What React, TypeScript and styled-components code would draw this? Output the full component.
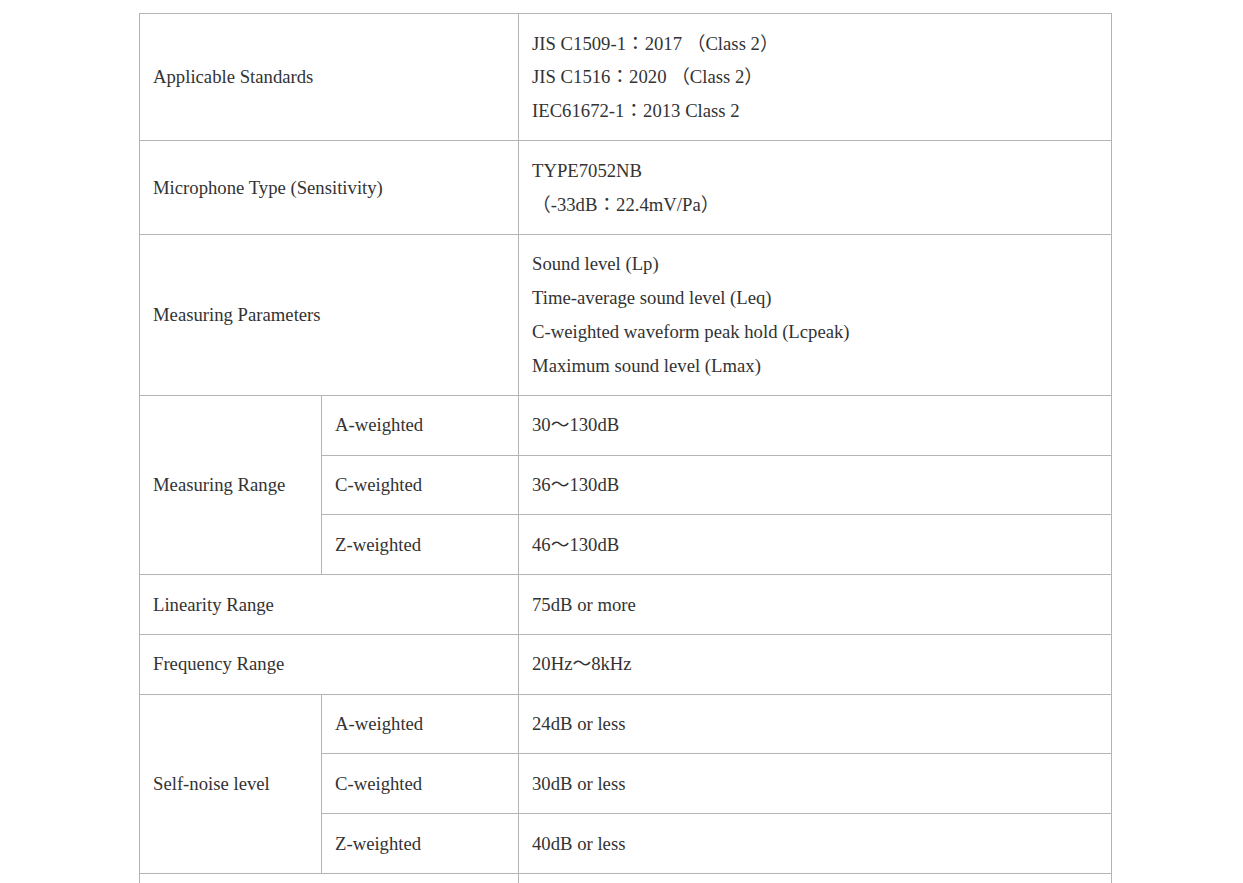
import React from "react";
import styled, { createGlobalStyle } from "styled-components";

const Global = createGlobalStyle`
  html, body { margin: 0; padding: 0; background: #ffffff; }
  body { font-family: "Liberation Serif", "Noto Sans CJK JP", serif; color: #333333; }
`;

const Page = styled.div`
  padding: 13px 0 0 139px;
`;

const Table = styled.table`
  width: 973px;
  border-collapse: collapse;
  table-layout: fixed;
  font-size: 18.7px;
  line-height: 33.75px;
  color: #333333;
`;

const Cell = styled.td`
  border: 1px solid #b4b4b4;
  padding: 12.5px 13px;
  vertical-align: middle;
  text-align: left;
`;

const EmptyCell = styled(Cell)`
  height: 34px;
`;

const Line = styled.div`
  white-space: nowrap;
`;

type Row = { label: string; value: string[] };
type Group = { label: string; subs: { label: string; value: string }[] };

const Wide = ({ label, value }: Row) => (
  <tr>
    <Cell colSpan={2}>{label}</Cell>
    <Cell>
      {value.map((v, i) => (
        <Line key={i}>{v}</Line>
      ))}
    </Cell>
  </tr>
);

const GroupRows = ({ label, subs }: Group) => (
  <>
    {subs.map((s, i) => (
      <tr key={i}>
        {i === 0 && <Cell rowSpan={subs.length}>{label}</Cell>}
        <Cell>{s.label}</Cell>
        <Cell>{s.value}</Cell>
      </tr>
    ))}
  </>
);

export default function App() {
  return (
    <>
      <Global />
      <Page>
        <Table>
          <colgroup>
            <col style={{ width: 182 }} />
            <col style={{ width: 197 }} />
            <col />
          </colgroup>
          <tbody>
            <Wide
              label="Applicable Standards"
              value={[
                "JIS C1509-1：2017 （Class 2）",
                "JIS C1516：2020 （Class 2）",
                "IEC61672-1：2013 Class 2",
              ]}
            />
            <Wide
              label="Microphone Type (Sensitivity)"
              value={["TYPE7052NB", "（-33dB：22.4mV/Pa）"]}
            />
            <Wide
              label="Measuring Parameters"
              value={[
                "Sound level (Lp)",
                "Time-average sound level (Leq)",
                "C-weighted waveform peak hold (Lcpeak)",
                "Maximum sound level (Lmax)",
              ]}
            />
            <GroupRows
              label="Measuring Range"
              subs={[
                { label: "A-weighted", value: "30〜130dB" },
                { label: "C-weighted", value: "36〜130dB" },
                { label: "Z-weighted", value: "46〜130dB" },
              ]}
            />
            <Wide label="Linearity Range" value={["75dB or more"]} />
            <Wide label="Frequency Range" value={["20Hz〜8kHz"]} />
            <GroupRows
              label="Self-noise level"
              subs={[
                { label: "A-weighted", value: "24dB or less" },
                { label: "C-weighted", value: "30dB or less" },
                { label: "Z-weighted", value: "40dB or less" },
              ]}
            />
            <tr>
              <EmptyCell colSpan={2} />
              <EmptyCell />
            </tr>
          </tbody>
        </Table>
      </Page>
    </>
  );
}
